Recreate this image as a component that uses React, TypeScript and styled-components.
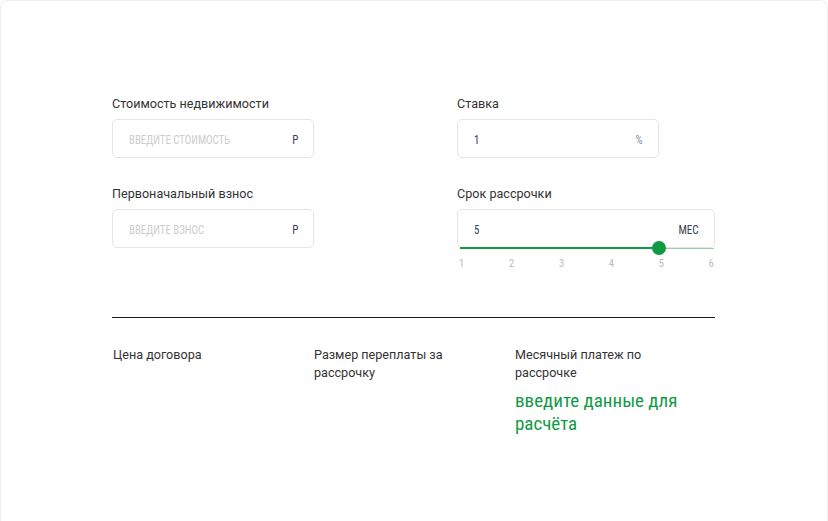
import React from "react";
import styled, { createGlobalStyle } from "styled-components";

const GlobalStyle = createGlobalStyle`
  html, body { margin: 0; padding: 0; background: #ffffff; }
  body { font-family: Roboto, "Liberation Sans", sans-serif; color: #333333; }
  * { box-sizing: border-box; }
`;

const condensed = `"Roboto Condensed", "Liberation Sans Narrow", "DejaVu Sans Condensed", Roboto, sans-serif`;

const Card = styled.div`
  border: 1px solid #efefef;
  border-bottom: 0;
  border-radius: 8px 8px 0 0;
  height: 521px;
  overflow: hidden;
  padding: 95px 0 0 111px;
`;

const Content = styled.div`
  width: 603px;
`;

const Form = styled.div`
  display: grid;
  grid-template-columns: 345px 258px;
  row-gap: 28px;
`;

const Field = styled.div`
  display: flex;
  flex-direction: column;
  gap: 7px;
`;

const Label = styled.div`
  font-size: 12.6px;
  line-height: 16px;
  color: #333333;
`;

const InputBox = styled.div<{ $w: number }>`
  position: relative;
  width: ${(p) => p.$w}px;
  height: 39px;
  border: 1px solid #e4e4e4;
  border-radius: 5px;
  display: flex;
  align-items: center;
  justify-content: space-between;
  padding: 0 15px 0 16px;
  font-family: ${condensed};
  font-size: 13.5px;
  text-transform: uppercase;
`;

const Value = styled.span<{ $placeholder?: boolean }>`
  display: inline-block;
  transform: scaleX(0.8);
  transform-origin: left center;
  color: ${(p) => (p.$placeholder ? "#cdcdcd" : "#2f3b5c")};
`;

const Unit = styled.span<{ $light?: boolean }>`
  display: inline-block;
  transform: scaleX(0.82);
  transform-origin: right center;
  color: ${(p) => (p.$light ? "#8a92a8" : "#3a4155")};
`;

const Track = styled.div`
  position: absolute;
  left: 2px;
  right: 0;
  bottom: -2px;
  height: 1px;
  background: #8fd3a6;
`;

const Fill = styled.div`
  position: absolute;
  left: 0;
  top: 0;
  height: 2px;
  margin-top: -1px;
  background: #0f9b44;
`;

const Thumb = styled.div`
  position: absolute;
  top: -7px;
  width: 14px;
  height: 14px;
  margin-left: -7px;
  border-radius: 50%;
  background: #0f9b44;
`;

const Ticks = styled.div`
  display: flex;
  justify-content: space-between;
  width: 258px;
  padding: 0 1px 0 2px;
  margin-top: 9px;
  font-family: ${condensed};
  font-size: 10.5px;
  color: #b6bac6;
`;

const SliderWrap = styled.div`
  display: flex;
  flex-direction: column;
`;

const Divider = styled.div`
  height: 1px;
  background: #1a1a1a;
  margin-top: 47px;
`;

const Results = styled.div`
  display: grid;
  grid-template-columns: 201px 201px 201px;
  margin-top: 28px;
  padding-left: 1px;
`;

const ResultCol = styled.div`
  display: flex;
  flex-direction: column;
  gap: 7px;
`;

const ResultLabel = styled.div`
  font-size: 12.6px;
  line-height: 18px;
  color: #333333;
  padding-right: 40px;
`;

const ResultValue = styled.div`
  font-family: ${condensed};
  font-size: 19px;
  line-height: 23px;
  color: #0f9b44;
  padding-right: 10px;
`;

const fill = 0.785;

export default function App() {
  return (
    <>
      <GlobalStyle />
      <Card>
        <Content>
          <Form>
            <Field>
              <Label>Стоимость недвижимости</Label>
              <InputBox $w={202}>
                <Value $placeholder>введите стоимость</Value>
                <Unit>Р</Unit>
              </InputBox>
            </Field>
            <Field>
              <Label>Ставка</Label>
              <InputBox $w={202}>
                <Value>1</Value>
                <Unit $light>%</Unit>
              </InputBox>
            </Field>
            <Field>
              <Label>Первоначальный взнос</Label>
              <InputBox $w={202}>
                <Value $placeholder>введите взнос</Value>
                <Unit>Р</Unit>
              </InputBox>
            </Field>
            <Field>
              <Label>Срок рассрочки</Label>
              <SliderWrap>
                <InputBox $w={258}>
                  <Value>5</Value>
                  <Unit>мес</Unit>
                  <Track>
                    <Fill style={{ width: `${fill * 100}%` }} />
                    <Thumb style={{ left: `${fill * 100}%` }} />
                  </Track>
                </InputBox>
                <Ticks>
                  {[1, 2, 3, 4, 5, 6].map((n) => (
                    <span key={n}>{n}</span>
                  ))}
                </Ticks>
              </SliderWrap>
            </Field>
          </Form>
          <Divider />
          <Results>
            <ResultCol>
              <ResultLabel>Цена договора</ResultLabel>
            </ResultCol>
            <ResultCol>
              <ResultLabel>Размер переплаты за рассрочку</ResultLabel>
            </ResultCol>
            <ResultCol>
              <ResultLabel>Месячный платеж по рассрочке</ResultLabel>
              <ResultValue>введите данные для расчёта</ResultValue>
            </ResultCol>
          </Results>
        </Content>
      </Card>
    </>
  );
}
